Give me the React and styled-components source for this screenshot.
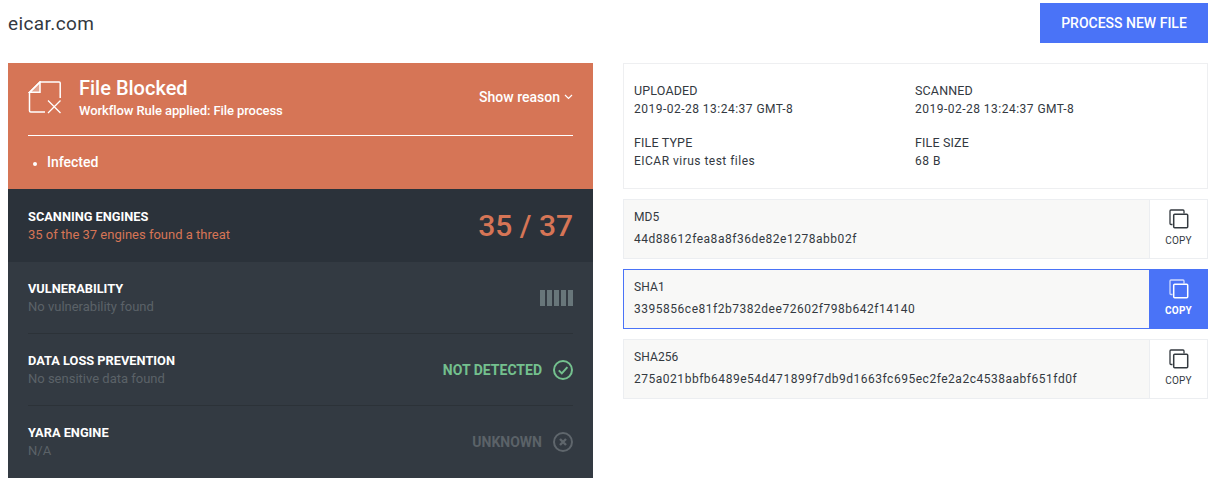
import React from 'react';
import styled, { createGlobalStyle } from 'styled-components';

const Global = createGlobalStyle`
  html, body { margin: 0; padding: 0; background: #fff; }
  body { font-family: Roboto, "Liberation Sans", sans-serif; color: #33393f; }
`;
const Page = styled.div`
  width: 1212px; height: 481px; box-sizing: border-box; padding: 3px 4px 0 8px; overflow: hidden;
`;
const Header = styled.header`
  display: flex; justify-content: space-between; align-items: center; height: 40px; margin-bottom: 20px;
`;
const Title = styled.h1`
  margin: 0; font-size: 19px; font-weight: 400; letter-spacing: 0.4px; color: #33393f;
`;
const PrimaryButton = styled.button`
  width: 168px; height: 40px; border: 0; padding: 0; background: #4a73f7; color: #fff;
  font: 500 14px Roboto, sans-serif; cursor: pointer;
`;
const Columns = styled.div`
  display: grid; grid-template-columns: 585px 585px; column-gap: 30px; align-items: start;
`;
const LeftPanel = styled.section`
  display: flex; flex-direction: column; height: 415px; background: #333a42;
`;
const Verdict = styled.div`
  height: 127px; box-sizing: border-box; padding: 0 20px; background: #d67556; color: #fff;
`;
const VerdictTop = styled.div`
  display: flex; align-items: center; height: 73px; box-sizing: border-box; border-bottom: 1px solid #fff;
  padding-bottom: 2px;
`;
const VerdictIcon = styled.svg`
  width: 34px; height: 34px; margin-right: 17px; flex: none;
`;
const VerdictText = styled.div`
  flex: 1;
`;
const VerdictTitle = styled.div`
  font-size: 20px; line-height: 24px; font-weight: 500;
`;
const VerdictSub = styled.div`
  font-size: 13px; line-height: 18px; font-weight: 500; letter-spacing: -0.08px; margin-top: 2px;
`;
const Reason = styled.div`
  display: flex; align-items: center; gap: 4px; font-size: 14px; font-weight: 500; margin-left: -1px; margin-bottom: 2px;
`;
const Reasons = styled.ul`
  margin: 0; padding: 17px 0 0 19px; font-size: 14px; line-height: 18px; font-weight: 500;
  & li::marker { font-size: 12px; }
`;
const ScanRow = styled.div`
  display: flex; align-items: center; justify-content: space-between; height: 73px; box-sizing: border-box;
  padding: 0 20px; background: #2b323a;
`;
const Rows = styled.div`
  padding: 0 20px;
`;
const Row = styled.div`
  display: flex; align-items: center; justify-content: space-between; height: 72px; box-sizing: border-box;
  border-bottom: 1px solid ${p => (p.$last ? 'transparent' : '#2c3238')};
`;
const RowName = styled.div`
  font-size: 12.8px; line-height: 18px; font-weight: 700; color: #fff; text-transform: uppercase;
`;
const RowSub = styled.div`
  font-size: 13px; line-height: 18px; color: ${p => p.$color || '#5b6268'};
`;
const Score = styled.div`
  font-size: 30px; font-weight: 500; color: #d67556;
`;
const Bars = styled.div`
  display: flex; gap: 2px;
`;
const Bar = styled.span`
  width: 5px; height: 16px; background: #68767a;
`;
const Status = styled.div`
  display: flex; align-items: center; gap: 11px; font-size: 14px; font-weight: 700; color: ${p => p.$color};
`;
const RightColumn = styled.div`
  display: flex; flex-direction: column; gap: 10px;
`;
const InfoCard = styled.div`
  display: grid; grid-template-columns: 281px 1fr; row-gap: 16px; align-content: start; height: 126px; box-sizing: border-box;
  padding: 18px 10px 0; border: 1px solid #eeeff1;
`;
const InfoLabel = styled.div`
  font-size: 12.5px; line-height: 18px; letter-spacing: 0.15px; color: #33393f;
`;
const InfoValue = styled.div`
  font-size: 12px; line-height: 18px; letter-spacing: 0.48px; color: #33393f;
`;
const HashLabel = styled.div`
  font-size: 12px; line-height: 18px; letter-spacing: 0.1px; color: #33393f;
`;
const HashCard = styled.div`
  display: flex; height: 60px; box-sizing: border-box; background: #f8f8f7;
  border: 1px solid ${p => (p.$active ? '#4a73f7' : '#eceef1')};
`;
const HashBody = styled.div`
  flex: 1; padding: 8px 10px 0;
`;
const HashValue = styled.div`
  font-size: 12px; line-height: 18px; letter-spacing: 0.52px; color: #33393f; margin-top: 4px;
`;
const CopyButton = styled.button`
  display: flex; flex-direction: column; align-items: center; width: 58px; flex: none; border: 0; padding: 9px 0 0;
  border-left: 1px solid ${p => (p.$active ? '#4a73f7' : '#eceef1')};
  background: ${p => (p.$active ? '#4a73f7' : '#fff')};
  color: ${p => (p.$active ? '#fff' : '#33393f')};
  font: ${p => (p.$active ? 700 : 400)} 10px/12px Roboto, sans-serif; letter-spacing: 0.2px;
`;
const CopySvg = styled.svg`
  width: 20px; height: 20px; margin-bottom: 6px;
`;

const FileX = () => (
  <VerdictIcon viewBox="0 0 34 34" fill="none" stroke="#fff" strokeWidth="1.5">
    <path d="M17 31H2.7a1.2 1.2 0 0 1-1.2-1.2V11.5L12 1h19.2a1 1 0 0 1 1 1V17" />
    <path d="M12 1v10.3H1.5L12 1z" fill="#fff" fillOpacity="0.35" />
    <path d="M20 19.5 32.5 32M32.5 19.5 20 32" strokeWidth="1.3" />
  </VerdictIcon>
);

const Chevron = () => (
  <svg width="9" height="6" viewBox="0 0 9 6" fill="none" stroke="#fff" strokeWidth="1.2"><path d="M1 1l3.5 3.5L8 1" /></svg>
);

const CheckCircle = () => (
  <svg width="20" height="20" viewBox="0 0 20 20" fill="none" stroke="#74c08e" strokeWidth="2">
    <circle cx="10" cy="10" r="9" /><path d="M5.8 10.4l3 3 5.6-6.2" />
  </svg>
);

const XCircle = () => (
  <svg width="20" height="20" viewBox="0 0 20 20" fill="none" stroke="#5f666c" strokeWidth="2">
    <circle cx="10" cy="10" r="9" /><path d="M7 7l6 6M13 7l-6 6" strokeWidth="2.4" />
  </svg>
);

const CopyIcon = ({ active }) => (
  <CopySvg viewBox="0 0 20 20" fill="none" stroke={active ? '#cfdafd' : '#33393f'} strokeWidth="1.3">
    <path d="M3.5 15.5H2a1 1 0 0 1-1-1V2a1 1 0 0 1 1-1h12a1 1 0 0 1 1 1v2.5" />
    <rect x="4.7" y="5.2" width="14" height="13.6" rx="1" stroke={active ? '#fff' : '#33393f'} strokeWidth="1.5" />
  </CopySvg>
);

const hashes = [
  { name: 'MD5', value: '44d88612fea8a8f36de82e1278abb02f' },
  { name: 'SHA1', value: '3395856ce81f2b7382dee72602f798b642f14140', active: true },
  { name: 'SHA256', value: '275a021bbfb6489e54d471899f7db9d1663fc695ec2fe2a2c4538aabf651fd0f' },
];

const info = [
  ['UPLOADED', '2019-02-28 13:24:37 GMT-8'],
  ['SCANNED', '2019-02-28 13:24:37 GMT-8'],
  ['FILE TYPE', 'EICAR virus test files'],
  ['FILE SIZE', '68 B'],
];

export default function App() {
  return (
    <Page>
      <Global />
      <Header>
        <Title>eicar.com</Title>
        <PrimaryButton>PROCESS NEW FILE</PrimaryButton>
      </Header>
      <Columns>
        <LeftPanel>
          <Verdict>
            <VerdictTop>
              <FileX />
              <VerdictText>
                <VerdictTitle>File Blocked</VerdictTitle>
                <VerdictSub>Workflow Rule applied: File process</VerdictSub>
              </VerdictText>
              <Reason>Show reason <Chevron /></Reason>
            </VerdictTop>
            <Reasons><li>Infected</li></Reasons>
          </Verdict>
          <ScanRow>
            <div>
              <RowName>Scanning Engines</RowName>
              <RowSub $color="#d67556">35 of the 37 engines found a threat</RowSub>
            </div>
            <Score>35 / 37</Score>
          </ScanRow>
          <Rows>
            <Row>
              <div><RowName>Vulnerability</RowName><RowSub>No vulnerability found</RowSub></div>
              <Bars>{[0, 1, 2, 3, 4].map(i => <Bar key={i} />)}</Bars>
            </Row>
            <Row>
              <div><RowName>Data Loss Prevention</RowName><RowSub>No sensitive data found</RowSub></div>
              <Status $color="#74c08e">NOT DETECTED <CheckCircle /></Status>
            </Row>
            <Row $last>
              <div><RowName>YARA Engine</RowName><RowSub>N/A</RowSub></div>
              <Status $color="#5b6268">UNKNOWN <XCircle /></Status>
            </Row>
          </Rows>
        </LeftPanel>
        <RightColumn>
          <InfoCard>
            {info.map(([label, value]) => (
              <div key={label}><InfoLabel>{label}</InfoLabel><InfoValue>{value}</InfoValue></div>
            ))}
          </InfoCard>
          {hashes.map(h => (
            <HashCard key={h.name} $active={h.active}>
              <HashBody>
                <HashLabel>{h.name}</HashLabel>
                <HashValue>{h.value}</HashValue>
              </HashBody>
              <CopyButton $active={h.active}><CopyIcon active={h.active} />COPY</CopyButton>
            </HashCard>
          ))}
        </RightColumn>
      </Columns>
    </Page>
  );
}
